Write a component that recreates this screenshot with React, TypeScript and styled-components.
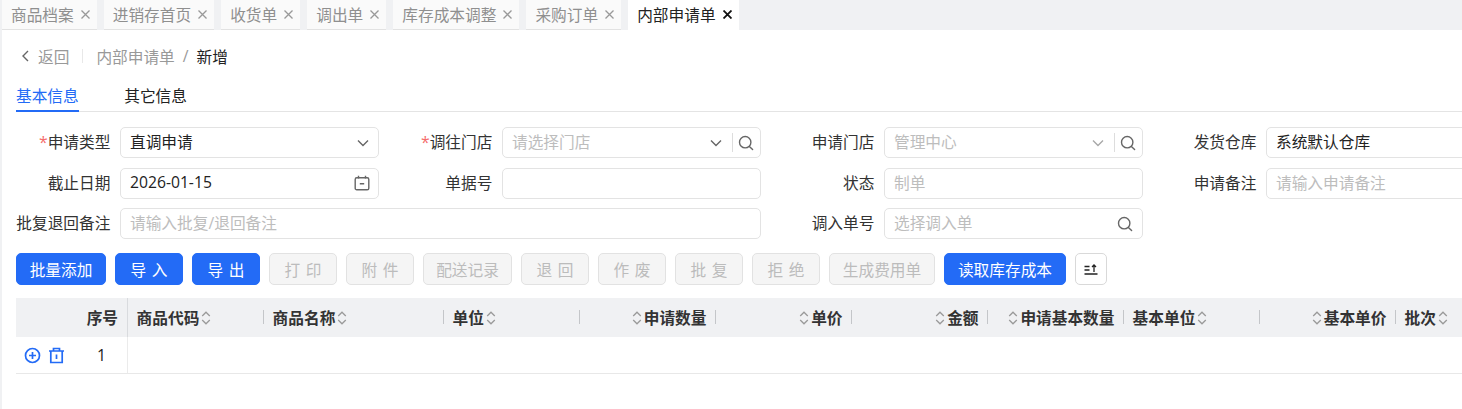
import { ReactNode } from "react";
import styled, { createGlobalStyle } from "styled-components";

const PRIMARY = "#236bf6";

const GlobalStyle = createGlobalStyle`
  html, body {
    margin: 0;
    height: 100%;
    overflow: hidden;
    background: #fff;
  }
  body {
    font-family: "Open Sans", "Noto Sans CJK SC", sans-serif;
    font-size: 15.7px;
    color: #333;
  }
  * { box-sizing: border-box; }
`;

const Page = styled.div`
  width: 1462px;
  height: 409px;
  overflow: hidden;
  border-left: 2px solid #f0f1f3;
`;

const TabBar = styled.div`
  display: flex;
  gap: 7px;
  height: 30px;
  margin-left: -2px;
  padding-left: 2px;
  background: #f0f1f3;
`;

const PageTab = styled.div<{ $active?: boolean }>`
  display: flex;
  align-items: center;
  gap: 7px;
  height: 30px;
  padding: 0 7px 0 9px;
  background: ${(p) => (p.$active ? "#fff" : "#fafafa")};
  border-bottom: 1px solid ${(p) => (p.$active ? "#fff" : "#e2e2e2")};
  color: ${(p) => (p.$active ? "#222" : "#8f8f8f")};
  white-space: nowrap;
`;

const TabClose = styled.svg<{ $active?: boolean }>`
  width: 9px;
  height: 9px;
  stroke: ${(p) => (p.$active ? "#111" : "#999")};
  stroke-width: ${(p) => (p.$active ? 1.8 : 1.3)};
  fill: none;
`;

const Breadcrumb = styled.div`
  display: flex;
  align-items: center;
  height: 54px;
  padding: 0 0 2px 19px;
  color: #999;
`;

const BackLink = styled.span`
  display: flex;
  align-items: center;
  gap: 9px;
`;

const CrumbDivider = styled.span`
  width: 1px;
  height: 14px;
  margin: 0 13px;
  background: #e8e8e8;
`;

const CrumbSlash = styled.span`
  margin: 0 8px;
`;

const CrumbCurrent = styled.span`
  color: #222;
`;

const SectionTabs = styled.div`
  display: flex;
  gap: 45.5px;
  height: 28px;
  margin-left: 14px;
  border-bottom: 1px solid #e4e4e4;
`;

const SectionTab = styled.div<{ $active?: boolean }>`
  height: 28px;
  line-height: 24px;
  color: ${(p) => (p.$active ? PRIMARY : "#222")};
  border-bottom: 2px solid ${(p) => (p.$active ? PRIMARY : "transparent")};
`;

const FormGrid = styled.div`
  display: grid;
  grid-template-columns: repeat(4, 382px);
  grid-auto-rows: 31px;
  row-gap: 9.5px;
  margin-top: 15px;
  padding-left: 14px;
`;

const FieldCell = styled.div<{ $span?: number }>`
  display: flex;
  align-items: center;
  gap: 9px;
  grid-column: span ${(p) => p.$span ?? 1};
  padding-right: 19px;
`;

const FieldLabel = styled.label`
  flex: 0 0 95px;
  padding: 0 0.6px 2px 0;
  text-align: right;
  color: #333;
  white-space: nowrap;
`;

const RequiredMark = styled.span`
  color: #f56c6c;
`;

const InputBox = styled.div`
  flex: 1;
  display: flex;
  align-items: center;
  height: 31px;
  padding: 0 6px 0 9px;
  border: 1px solid #e3e3e3;
  border-radius: 5px;
  background: #fff;
  min-width: 0;
`;

const InputText = styled.span<{ $muted?: boolean }>`
  flex: 1;
  padding-bottom: 2px;
  color: ${(p) => (p.$muted ? "#bdbdbd" : "#222")};
  white-space: nowrap;
`;

const AddonDivider = styled.span`
  width: 1px;
  height: 19px;
  margin: 0 5px 0 10px;
  background: #ddd;
`;

const IconGap = styled.span<{ $w: number }>`
  flex: none;
  width: ${(p) => p.$w}px;
`;

const FieldIcon = styled.svg<{ $light?: boolean }>`
  flex: none;
  fill: none;
  stroke: ${(p) => (p.$light ? "#a8a8a8" : "#666")};
  stroke-width: 1.4;
`;

const Toolbar = styled.div`
  display: flex;
  gap: 9px;
  margin: 14px 0 13px 14px;
`;

const Button = styled.button<{ $kind?: "primary" | "disabled"; $w: number; $spaced?: boolean }>`
  display: flex;
  align-items: center;
  justify-content: center;
  width: ${(p) => p.$w}px;
  height: 32px;
  padding: 0;
  font: inherit;
  letter-spacing: ${(p) => (p.$spaced ? "0.36em" : "0")};
  text-indent: ${(p) => (p.$spaced ? "0.36em" : "0")};
  border-radius: 5px;
  white-space: nowrap;
  border: 1px solid ${(p) => (p.$kind === "primary" ? PRIMARY : p.$kind === "disabled" ? "#e2e2e2" : "#d9d9d9")};
  background: ${(p) => (p.$kind === "primary" ? PRIMARY : p.$kind === "disabled" ? "#f5f5f5" : "#fff")};
  color: ${(p) => (p.$kind === "primary" ? "#fff" : "#bcbcbc")};
`;

const TableWrap = styled.div`
  margin-left: 14px;
  width: 1600px;
`;

const HeadRow = styled.div`
  display: grid;
  grid-template-columns: 112px 136px 180px repeat(8, 136px);
  height: 39px;
  background: #f0f1f3;
`;

const HeadCell = styled.div<{ $right?: boolean; $first?: boolean }>`
  position: relative;
  display: flex;
  align-items: center;
  justify-content: ${(p) => (p.$right ? "flex-end" : "flex-start")};
  gap: 1px;
  padding: ${(p) => (p.$first ? "0 9px 0 0" : p.$right ? "0 9.5px 0 0" : "0 0 0 8.6px")};
  font-weight: 700;
  color: #333;
  white-space: nowrap;
  border-right: ${(p) => (p.$first ? "1px solid #d9dbde" : "none")};

  &::after {
    content: ${(p) => (p.$first ? "none" : '""')};
    position: absolute;
    right: 0;
    top: 12px;
    width: 1px;
    height: 14px;
    background: #c4c6c9;
  }
`;

const SortIcon = styled.svg`
  flex: none;
  width: 10px;
  height: 16px;
  margin: 0 1px;
  fill: none;
  stroke: #9a9a9a;
  stroke-width: 1.3;
`;

const BodyRow = styled.div`
  display: flex;
  height: 37px;
  border-bottom: 1px solid #e8e8e8;
`;

const IndexCell = styled.div`
  display: flex;
  align-items: center;
  width: 112px;
  padding: 0 21px 0 8px;
  border-right: 1px solid #ebebeb;
  color: #222;
`;

const RowActions = styled.div`
  display: flex;
  align-items: center;
  gap: 7px;
  flex: 1;
`;

const ActionIcon = styled.svg`
  width: 17px;
  height: 17px;
  fill: none;
  stroke: ${PRIMARY};
  stroke-width: 1.7;
`;

const Chevron = ({ light }: { light?: boolean }) => (
  <FieldIcon $light={light} width="12" height="12" viewBox="0 0 12 12">
    <path d="M1 3.5 6 8.5 11 3.5" />
  </FieldIcon>
);

const Search = () => (
  <FieldIcon width="16" height="16" viewBox="0 0 16 16">
    <circle cx="7.2" cy="7.2" r="5.7" />
    <path d="M11.4 11.4 14.6 14.6" strokeLinecap="round" />
  </FieldIcon>
);

const Calendar = () => (
  <FieldIcon width="16" height="16" viewBox="0 0 16 16">
    <rect x="1.2" y="2.8" width="13.6" height="12" rx="1.6" />
    <path d="M4.5 0.8V3.6M11.5 0.8V3.6M5.8 8.8H10.2" />
  </FieldIcon>
);

const Sort = () => (
  <SortIcon viewBox="0 0 10 16">
    <path d="M1.2 6 5 2.2 8.8 6M1.2 10 5 13.8 8.8 10" />
  </SortIcon>
);

function Field({ label, required, span, children }: { label: string; required?: boolean; span?: number; children: ReactNode }) {
  return (
    <FieldCell $span={span}>
      <FieldLabel>
        {required && <RequiredMark>*</RequiredMark>}
        {label}
      </FieldLabel>
      <InputBox>{children}</InputBox>
    </FieldCell>
  );
}

const tabs = ["商品档案", "进销存首页", "收货单", "调出单", "库存成本调整", "采购订单", "内部申请单"];

const buttons: { text: string; w: number; kind: "primary" | "disabled"; spaced?: boolean }[] = [
  { text: "批量添加", w: 90, kind: "primary" },
  { text: "导入", w: 68, kind: "primary", spaced: true },
  { text: "导出", w: 68, kind: "primary", spaced: true },
  { text: "打印", w: 68, kind: "disabled", spaced: true },
  { text: "附件", w: 68, kind: "disabled", spaced: true },
  { text: "配送记录", w: 89, kind: "disabled" },
  { text: "退回", w: 68, kind: "disabled", spaced: true },
  { text: "作废", w: 68, kind: "disabled", spaced: true },
  { text: "批复", w: 68, kind: "disabled", spaced: true },
  { text: "拒绝", w: 68, kind: "disabled", spaced: true },
  { text: "生成费用单", w: 106, kind: "disabled" },
  { text: "读取库存成本", w: 122, kind: "primary" },
];

const columns: { title: string; right?: boolean }[] = [
  { title: "商品代码" },
  { title: "商品名称" },
  { title: "单位" },
  { title: "申请数量", right: true },
  { title: "单价", right: true },
  { title: "金额", right: true },
  { title: "申请基本数量", right: true },
  { title: "基本单位" },
  { title: "基本单价", right: true },
  { title: "批次" },
];

export default function App() {
  return (
    <Page>
      <GlobalStyle />
      <TabBar>
        {tabs.map((t, i) => {
          const active = i === tabs.length - 1;
          return (
            <PageTab key={t} $active={active}>
              {t}
              <TabClose $active={active} viewBox="0 0 9 9">
                <path d="M0.5 0.5 8.5 8.5M8.5 0.5 0.5 8.5" />
              </TabClose>
            </PageTab>
          );
        })}
      </TabBar>

      <Breadcrumb>
        <BackLink>
          <FieldIcon width="8" height="12" viewBox="0 0 8 12">
            <path d="M7 1 2 6 7 11" />
          </FieldIcon>
          返回
        </BackLink>
        <CrumbDivider />
        内部申请单
        <CrumbSlash>/</CrumbSlash>
        <CrumbCurrent>新增</CrumbCurrent>
      </Breadcrumb>

      <SectionTabs>
        <SectionTab $active>基本信息</SectionTab>
        <SectionTab>其它信息</SectionTab>
      </SectionTabs>

      <FormGrid>
        <Field label="申请类型" required>
          <InputText>直调申请</InputText>
          <Chevron />
          <IconGap $w={3} />
        </Field>
        <Field label="调往门店" required>
          <InputText $muted>请选择门店</InputText>
          <Chevron />
          <AddonDivider />
          <Search />
        </Field>
        <Field label="申请门店">
          <InputText $muted>管理中心</InputText>
          <Chevron light />
          <AddonDivider />
          <Search />
        </Field>
        <Field label="发货仓库">
          <InputText>系统默认仓库</InputText>
        </Field>

        <Field label="截止日期">
          <InputText>2026-01-15</InputText>
          <Calendar />
          <IconGap $w={2} />
        </Field>
        <Field label="单据号">
          <InputText />
        </Field>
        <Field label="状态">
          <InputText $muted>制单</InputText>
        </Field>
        <Field label="申请备注">
          <InputText $muted>请输入申请备注</InputText>
        </Field>

        <Field label="批复退回备注" span={2}>
          <InputText $muted>请输入批复/退回备注</InputText>
        </Field>
        <Field label="调入单号">
          <InputText $muted>选择调入单</InputText>
          <Search />
          <IconGap $w={3} />
        </Field>
      </FormGrid>

      <Toolbar>
        {buttons.map((b) => (
          <Button key={b.text} $kind={b.kind} $w={b.w} $spaced={b.spaced}>
            {b.text}
          </Button>
        ))}
        <Button $w={32}>
          <svg width="14" height="12" viewBox="0 0 14 12" fill="none" stroke="#222" strokeWidth="1.3">
            <path d="M0.5 3.5H5.5M0.5 7H5.5M0.5 11H13.5M10 9V2M8 4 10 2 12 4" />
          </svg>
        </Button>
      </Toolbar>

      <TableWrap>
        <HeadRow>
          <HeadCell $first $right>序号</HeadCell>
          {columns.map((c) => (
            <HeadCell key={c.title} $right={c.right}>
              {c.right && <Sort />}
              {c.title}
              {!c.right && <Sort />}
            </HeadCell>
          ))}
        </HeadRow>
        <BodyRow>
          <IndexCell>
            <RowActions>
              <ActionIcon viewBox="0 0 17 17">
                <circle cx="8.5" cy="8.5" r="7" />
                <path d="M8.5 5V12M5 8.5H12" />
              </ActionIcon>
              <ActionIcon viewBox="0 0 17 17">
                <path d="M1 4H16M5.5 4V1.5H11.5V4M2.8 4V15.5H14.2V4M8.5 7.5V12" />
              </ActionIcon>
            </RowActions>
            1
          </IndexCell>
        </BodyRow>
      </TableWrap>
    </Page>
  );
}
